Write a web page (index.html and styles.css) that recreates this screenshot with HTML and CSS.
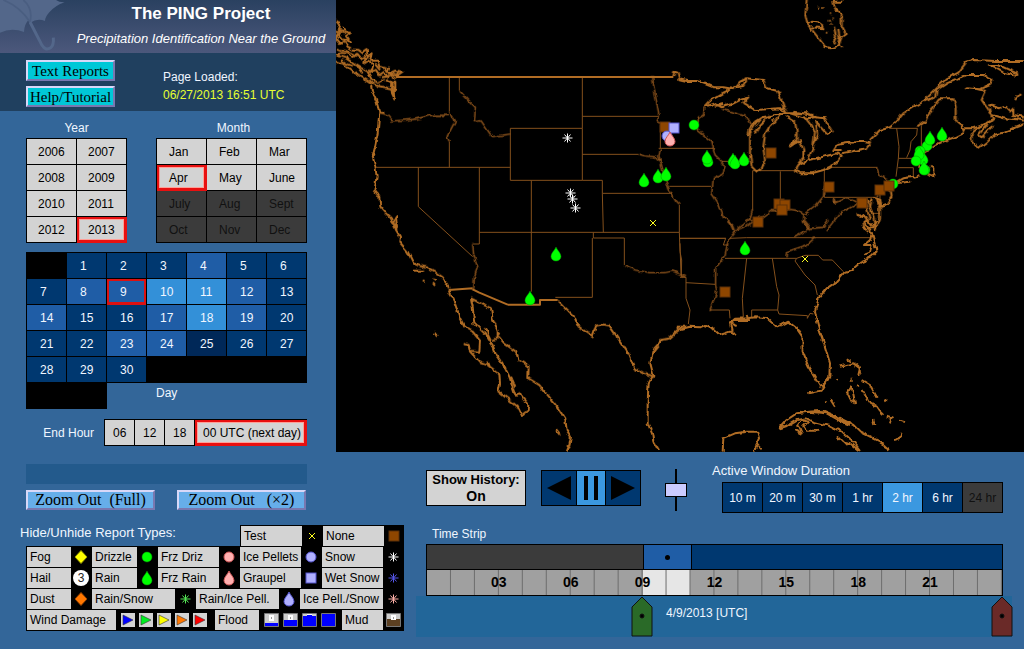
FILE: index.html
```html
<!DOCTYPE html>
<html lang="en">
<head>
  <meta charset="UTF-8">
  <meta name="viewport" content="width=device-width, initial-scale=1.0">
  <title>The PING Project</title>
  <link rel="stylesheet" href="styles.css">
</head>
<body>
  <!-- shared report symbols, all centered on 0,0 -->
  <svg class="defs" aria-hidden="true">
    <defs>
      <path id="drop" d="M0-7C1-4 5-1 5 2.500A5 4.500 0 0 1-5 2.500C-5-1-1-4 0-7Z"/>
      <circle id="dot" r="5"/>
      <rect id="square" x="-5" y="-5" width="10" height="10"/>
      <path id="diamond" d="M0-6.500L6 0 0 6.500-6 0Z"/>
      <path id="star" d="M.5-4.500V4.500M-4.500 0H5.500M-2.500-3.500L3.500 3.500M3.500-3.500L-2.500 3.500" fill="none"/>
      <path id="cross" d="M-3-3L3 3M3-3L-3 3" fill="none"/>
      <path id="flag" d="M-4-5L6 0-4 5Z"/>
    </defs>
  </svg>

  <div class="top">
    <div class="sidebar">
      <header class="banner">
        <svg class="umbrella" width="66" height="53" viewBox="0 0 198 159">
          <path class="canopy" d="M0 0H168Q178 8 194 7Q165 17 148 37Q135 52 135 63Q112 54 91 68L85 61Q73 73 72 96Q35 82 0 98Z"/>
          <path class="shade" d="M90 66Q60 20 10 0M90 66Q100 25 70 0"/>
          <path class="handle" d="M90 66L126 136Q136 153 152 143Q162 136 160 113"/>
        </svg>
        <div class="titles">
          <h1>The PING Project</h1>
          <p>Precipitation Identification Near the Ground</p>
        </div>
      </header>

      <div class="links">
        <div class="link-buttons">
          <button type="button" class="bevel teal">Text Reports</button>
          <button type="button" class="bevel teal">Help/Tutorial</button>
        </div>
        <div class="loaded">
          <div>Page Loaded:</div>
          <div class="stamp">06/27/2013 16:51 UTC</div>
        </div>
      </div>

      <div class="pickers">
        <div class="year">
          <h2>Year</h2>
          <div class="cells">
            <button type="button">2006</button><button type="button">2007</button>
            <button type="button">2008</button><button type="button">2009</button>
            <button type="button">2010</button><button type="button">2011</button>
            <button type="button">2012</button><button type="button" class="selected">2013</button>
          </div>
        </div>
        <div class="month">
          <h2>Month</h2>
          <div class="cells">
            <button type="button">Jan</button><button type="button">Feb</button><button type="button">Mar</button>
            <button type="button" class="selected">Apr</button><button type="button">May</button><button type="button">June</button>
            <button type="button" disabled>July</button><button type="button" disabled>Aug</button><button type="button" disabled>Sept</button>
            <button type="button" disabled>Oct</button><button type="button" disabled>Nov</button><button type="button" disabled>Dec</button>
          </div>
        </div>
      </div>

      <div class="days">
        <span class="blank"></span>
        <button type="button">1</button>
        <button type="button">2</button>
        <button type="button">3</button>
        <button type="button" class="some">4</button>
        <button type="button">5</button>
        <button type="button">6</button>
        <button type="button">7</button>
        <button type="button" class="some">8</button>
        <button type="button" class="some picked">9</button>
        <button type="button" class="many">10</button>
        <button type="button" class="many">11</button>
        <button type="button" class="some">12</button>
        <button type="button">13</button>
        <button type="button" class="some">14</button>
        <button type="button">15</button>
        <button type="button">16</button>
        <button type="button" class="some">17</button>
        <button type="button" class="many">18</button>
        <button type="button" class="some">19</button>
        <button type="button">20</button>
        <button type="button">21</button>
        <button type="button">22</button>
        <button type="button" class="some">23</button>
        <button type="button" class="some">24</button>
        <button type="button" class="few">25</button>
        <button type="button">26</button>
        <button type="button">27</button>
        <button type="button">28</button>
        <button type="button">29</button>
        <button type="button">30</button>
        <span class="blank rest"></span>
        <span class="blank tail"></span>
        <h2>Day</h2>
      </div>

      <div class="end-hour">
        <h2>End Hour</h2>
        <div class="cells">
          <button type="button">06</button><button type="button">12</button><button type="button">18</button><button type="button" class="selected">00 UTC (next day)</button>
        </div>
      </div>
    </div>

    <svg class="map" viewBox="0 0 2064 1356" preserveAspectRatio="xMinYMin slice" role="img" aria-label="Map of reports">
      <defs>
        <filter id="rough" filterUnits="userSpaceOnUse" x="0" y="0" width="2064" height="1356" color-interpolation-filters="sRGB">
          <feTurbulence type="fractalNoise" baseFrequency="0.05" numOctaves="2" seed="4"/>
          <feDisplacementMap in="SourceGraphic" scale="14" xChannelSelector="R" yChannelSelector="G"/>
        </filter>
      </defs>

      <!-- state borders, straight ones -->
      <g class="state">
        <path d="M340 231V335M340 425V502M370 231V272M118 502H523M247 502V620L410 770M430 502V732H410"/>
        <path d="M523 385H739V541H523ZM739 231V385M739 349H968M739 463H908M586 541V875M739 541H799V580M799 580H1008M799 580L802 697"/>
        <path d="M430 697H1030M772 697V714H865V795M769 714V892H658M973 375V445M968 445H1132M1000 559H1125M1030 615V697L1032 755 1037 780 1036 830M1030 715H1170"/>
        <g transform="translate(1032 0)">
          <path d="M218 512V628M301 514V632M218 512H350M433 508V592H590M455 502H592M650 385L657 440 655 475 648 530M655 475H715M655 503H700V535M630 385H712L710 405 693 425 690 450 680 473M724 378V440M125 484H208M560 592L580 640H600M600 583V620"/>
        </g>
        <g transform="translate(1032 660)">
          <path d="M0 55H137L130 75H145M200 53H575M135 115H350M200 115L187 235 190 292M277 115L290 200 297 225 293 270H215V292M293 270L297 282 382 287V295L390 280 400 282M18 188L105 193M0 70L3 168 18 172V235L30 270 25 312M90 270H148L150 295M350 115L345 123 375 165 405 195 412 225M350 115L375 106H415L428 120H457L490 155M200 53L150 55M18 172H0"/>
        </g>
      </g>

      <!-- state borders along rivers and ridges -->
      <g class="state river" filter="url(#rough)">
        <path d="M130 338L155 345 170 363 235 358 285 346H340M340 335L358 362 333 410 340 425M370 272L418 322 415 365 435 362 468 410 523 402"/>
        <path d="M949 231L955 270 968 340 965 360 973 375M908 463L925 468 955 470 970 485M973 445L968 470 975 490 990 545 1000 570 1020 605 1030 615M865 795L900 810 940 818 985 818 1010 813 1050 830M410 732L413 765 425 800 415 830 413 870"/>
        <g transform="translate(1032 0)">
          <path d="M75 322L70 345 55 355 52 390 95 425 105 465 125 484 135 500 130 520 100 535 95 580 115 610 130 650 150 665 160 690"/>
          <path d="M130 328L200 350 215 375M218 628L210 655 195 670 170 690M210 660L250 650 275 632 301 632 330 628 355 632 372 645 405 620 430 590 433 560M372 645L370 665 390 690M463 592V610L500 592 535 610 545 600M535 610L480 640 440 690M592 502L600 525 625 540M590 590L605 565"/>
        </g>
        <g transform="translate(1032 660)">
          <path d="M140 0L158 15 165 35 145 60 135 105 107 145V195L110 215 90 270M165 35L200 20 220 5M370 0L390 25 345 50M390 25L430 22 445 0M405 53L380 75 320 95 318 112"/>
        </g>
      </g>

      <path class="coast" d="M180 231H1012M515 914H612V900H665M338 870L410 865M410 868L430 878 515 914"/>

      <g class="coast" filter="url(#rough)">
        <!-- British Columbia and Puget Sound -->
        <path d="M0 62L10 75 6 92 25 96 45 98 30 108 42 125 20 118 5 102 0 118 12 132 25 125 35 140 50 148 65 150 78 160 92 150 95 170 110 160 105 182 125 182 130 200 150 205 160 220 178 212 200 215 185 225 170 220"/>
        <path d="M0 95L15 100 0 108M20 80L35 98M0 145L15 150 40 155 60 165 50 172 35 160 10 158 5 172M60 160L75 178 88 170 85 190 98 182 110 200 100 215 120 210 130 225 145 215 155 232 165 220 180 235M115 190L132 210M135 232L160 228 175 240M160 200L155 215 168 232M190 207L182 225"/>
        <path d="M0 185L20 190 45 210 75 230 100 245 125 258 150 262 165 265M0 165L30 175 60 195 95 215 105 235 125 248 145 240M15 180L35 192 50 198M65 200L80 220M150 240L165 250 172 260 175 295 168 280 165 255 178 245 178 275M100 240L110 250"/>
        <!-- Pacific coast -->
        <path d="M105 255L108 275 120 300 130 335 145 338M130 335L125 400 115 450 110 470 118 500 122 530 115 570 130 590 133 620 150 640 165 655 170 668 180 650 183 685 172 665 180 690 192 710 190 725 215 755 232 790 250 798 270 802 300 818 320 832 335 852 338 868"/>
        <path d="M232 812L265 812M260 841L266 843M293 835L302 840M291 850L297 857M296 998L303 1010"/>
        <!-- Rio Grande -->
        <path d="M665 900L690 925 715 950 728 980 770 1008 780 978 800 973 820 976 850 1020 880 1065 895 1105 925 1122 952 1128"/>
        <!-- Baja and mainland Mexico -->
        <g transform="translate(0 660)">
          <path d="M338 215L355 245 370 290 385 320 410 335 432 362 430 395 402 392 398 375 383 372M400 392L430 425 460 435 455 425M455 435L490 462 492 490 487 515 520 540 545 560 557 585 575 572 577 555 560 535 550 520 540 530 530 500 520 470 505 440 480 405 470 375 450 345 415 310 410 260 405 235 430 248 465 265 470 295 485 330 485 355 470 360M448 325L465 360M525 470L538 500M500 425L510 445M452 330L458 350"/>
          <path d="M485 345L490 335M488 350L505 370 540 395 548 420 578 440 577 475 610 495 630 520 660 555 688 598 692 630 705 650 700 675 692 695M660 630L672 645"/>
          <path d="M1050 320L1025 320 1030 328 1000 355 975 360 970 370 950 395 943 430 952 465 938 490 935 540 935 610 948 640 952 665 970 695M980 358L955 385 948 410M1032 328L1022 335M938 490L945 480"/>
        </g>

        <!-- lakes and north east -->
        <g transform="translate(1032 0)">
          <path d="M-20 231L-17 215 -7 218 -2 238 20 243 50 243 75 252 100 262 130 262 165 268"/>
          <path d="M75 320L95 298 130 278 165 262 180 245 200 235 250 240 260 265 290 272 300 290 310 320 320 340 295 325 260 328 225 330 190 310 205 292 180 300 150 315 125 322 105 310 75 320M165 262L190 258 200 240M105 318L130 312M290 325L310 325M295 275L305 300"/>
          <path d="M320 340L350 340 380 340 405 352 435 355 445 375 458 395 440 402 420 380 405 365M320 340L290 345 245 352 225 375 210 400 210 460 215 500 230 515 245 505 255 485 250 440 255 405 270 380 285 365 300 345M245 352L225 365 210 385 205 405M270 345L240 375 225 400M320 350L345 365 350 395 350 420 335 430 330 440 360 420 370 450 370 475 355 495 345 512 360 520 395 520 430 510 470 490 485 470 470 460 430 470 385 480 370 490M375 350L395 375 405 395 400 440 385 475M405 360L415 405 400 435M330 340L380 355 410 350M275 358L280 362M355 495L370 485M340 335L400 345"/>
          <path d="M485 460L510 455 560 445 570 430 545 425 495 430 470 435 460 450 485 450M570 420L600 390 630 382 650 365 670 340 710 315 735 300 760 275 800 235 835 218 860 185 880 180 950 183 1032 183"/>
          <path d="M735 305L765 290 770 270 800 250 860 225 910 225 935 235 930 255 900 268 858 265M890 268L918 272 905 300 925 330 940 360 910 375 880 385 855 385 850 400 830 410 800 420 765 435 740 450 725 460"/>
          <path d="M712 382L735 365 755 325 780 295 820 295 827 320V365L855 388M925 315L960 325 975 320 990 335 1000 325 1000 345 1032 350M930 325L935 345 970 355 1010 358M930 195L955 195 1010 220 1012 228 970 218ZM1005 300L1020 282"/>
          <path d="M940 360L905 375 875 400 875 425 895 445 920 425 940 405 965 400 1000 385 1032 372M920 375L895 405 905 412 940 375M1000 355L1032 362"/>
          <path d="M720 470L715 500 750 525 760 528V505L750 500M700 535L720 525M648 548L670 535 700 530M650 550L690 545M640 550L630 560 635 590 620 615 605 620 600 600 580 590M590 595L600 620 600 655 585 690M575 595L570 620 580 650 585 690M530 640L555 650 575 680M565 600L560 625 570 660M555 690L550 670 560 660"/>
          <path d="M380 0L376 45 382 72 400 95 420 120 435 140 455 145 475 138 485 110 497 102 485 80 485 45 465 25 460 5H490M380 72L400 65 420 68 430 85 395 82M462 80L468 110 460 130M478 115L472 140M485 145V138M475 90L480 120"/>
          <path class="speck" d="M415 23h5M427 24h3M446 62h4M455 55h3M438 98h4M449 72h3M450 40h3"/>
        </g>

        <!-- Gulf, Florida, islands -->
        <g transform="translate(1032 660)">
          <path d="M0 328L30 320 60 322 75 315 95 322 120 345 150 335 168 345M155 335L150 310 165 296 205 295 225 292 260 294 292 322 325 305 350 325 367 350 368 395 385 440 405 475 420 500 435 495 448 470 450 430 435 380 420 335 408 290 405 275 415 235 440 205 470 185 495 155 515 150 540 128 560 120M160 300L210 300M150 310L170 318M200 285L205 298M370 385V405M378 430L385 445M405 515L385 520M435 495L425 512 405 515"/>
          <path d="M575 40L585 75 590 95 575 110 555 118M550 5L570 30 575 45 570 60 552 75 575 75 570 95 555 100M590 0L575 25 560 20M560 0L575 15M548 20L565 35"/>
          <path d="M298 625L320 600 350 580 385 575 430 572 460 585 490 600 520 615 540 635 570 650 600 665 630 690M300 625L320 618 350 600 380 595 400 605 450 618 490 638 520 665 540 690M350 620L365 600 385 605 370 620 380 632 415 632M345 630L365 640 355 615M385 575L440 580 475 600 510 615M470 650L490 665 510 670 535 690M480 655L500 675M600 670L625 685"/>
          <path d="M480 440L500 435 520 430 540 445 535 465M500 418L512 425M470 475L474 480M515 470V485M500 520L515 500 525 550 515 545 500 515M545 480L570 495 590 530M548 510L565 545 590 560 600 575 610 585M530 498L535 502M615 538L620 545M620 590L635 595 630 610M640 590L630 600M660 602L672 606M580 600L583 612M665 635L660 655 642 660M452 540L465 560M435 542L440 545M538 440L540 460"/>
          <path d="M128 695L130 655 165 640 200 635 235 635 240 655 220 695M232 675L242 685"/>
        </g>
      </g>

      <!-- reports -->
      <g class="reports" transform="scale(3)">
        <use href="#star" class="white" x="231" y="138"/>
        <use href="#star" class="white" x="234" y="193"/>
        <use href="#star" class="white" x="236" y="199"/>
        <use href="#star" class="white" x="239" y="208"/>
        <use href="#square" class="brown" x="329" y="127"/>
        <use href="#square" class="violet" x="338" y="128"/>
        <use href="#dot" class="violet" x="331" y="136"/>
        <use href="#drop" class="pink" x="334" y="139"/>
        <use href="#dot" class="green" x="358" y="125"/>
        <use href="#drop" class="green" x="308" y="180"/>
        <use href="#drop" class="green" x="322" y="176"/>
        <use href="#drop" class="green" x="330" y="174"/>
        <use href="#cross" class="yellow" x="317" y="223"/>
        <use href="#drop" class="green" x="372" y="160"/>
        <use href="#drop" class="green" x="371" y="157"/>
        <use href="#drop" class="green" x="397" y="160"/>
        <use href="#drop" class="green" x="399" y="162"/>
        <use href="#drop" class="green" x="408" y="159"/>
        <use href="#drop" class="green" x="220" y="254"/>
        <use href="#drop" class="green" x="194" y="298"/>
        <use href="#drop" class="green" x="409" y="248"/>
        <use href="#square" class="brown" x="435" y="153"/>
        <use href="#square" class="brown" x="493" y="187"/>
        <use href="#square" class="brown" x="443" y="204"/>
        <use href="#square" class="brown" x="449" y="205"/>
        <use href="#square" class="brown" x="446" y="210"/>
        <use href="#square" class="brown" x="422" y="222"/>
        <use href="#square" class="brown" x="389" y="292"/>
        <use href="#square" class="brown" x="526" y="203"/>
        <use href="#square" class="brown" x="544" y="190"/>
        <use href="#dot" class="green" x="557" y="184"/>
        <use href="#square" class="brown" x="553" y="186"/>
        <use href="#cross" class="yellow" x="469" y="259"/>
        <use href="#drop" class="green" x="606" y="134"/>
        <use href="#dot" class="green" x="591" y="146"/>
        <use href="#drop" class="green" x="594" y="138"/>
        <use href="#drop" class="green" x="587" y="158"/>
        <use href="#dot" class="green" x="584" y="151"/>
        <use href="#drop" class="green" x="583" y="153"/>
        <use href="#dot" class="green" x="580" y="161"/>
        <use href="#dot" class="green" x="589" y="170"/>
        <use href="#drop" class="green" x="588" y="168"/>
      </g>
    </svg>
  </div>

  <div class="bottom">
    <div class="tools">
      <div class="status"></div>
      <div class="zoom-buttons">
        <button type="button" class="bevel sky">Zoom Out&nbsp; (Full)</button>
        <button type="button" class="bevel sky">Zoom Out&nbsp;&nbsp; (×2)</button>
      </div>

      <div class="types-head">
        <h2>Hide/Unhide Report Types:</h2>
        <div class="types-row first">
          <button type="button" class="type"><span class="w61">Test</span><svg viewBox="-10 -10 20 20"><use href="#cross" class="yellow"/></svg></button>
          <button type="button" class="type"><span class="w61">None</span><svg viewBox="-10 -10 20 20"><use href="#square" class="brown"/></svg></button>
        </div>
      </div>
      <div class="types">
        <div class="types-row">
          <button type="button" class="type"><span class="w44">Fog</span><svg viewBox="-10 -10 20 20"><use href="#diamond" class="fog"/></svg></button>
          <button type="button" class="type"><span class="w45">Drizzle</span><svg viewBox="-10 -10 20 20"><use href="#dot" class="green"/></svg></button>
          <button type="button" class="type"><span class="w61">Frz Driz</span><svg viewBox="-10 -10 20 20"><use href="#dot" class="pink"/></svg></button>
          <button type="button" class="type"><span class="w61">Ice Pellets</span><svg viewBox="-10 -10 20 20"><use href="#dot" class="violet"/></svg></button>
          <button type="button" class="type"><span class="w61">Snow</span><svg viewBox="-10 -10 20 20"><use href="#star" class="white"/></svg></button>
        </div>
        <div class="types-row">
          <button type="button" class="type"><span class="w44">Hail</span><svg viewBox="-10 -10 20 20"><circle r="8" fill="#fff"/><text class="hail" y="4" text-anchor="middle">3</text></svg></button>
          <button type="button" class="type"><span class="w45">Rain</span><svg viewBox="-10 -10 20 20"><use href="#drop" class="green"/></svg></button>
          <button type="button" class="type"><span class="w61">Frz Rain</span><svg viewBox="-10 -10 20 20"><use href="#drop" class="pink"/></svg></button>
          <button type="button" class="type"><span class="w61">Graupel</span><svg viewBox="-10 -10 20 20"><use href="#square" class="violet"/></svg></button>
          <button type="button" class="type"><span class="w61">Wet Snow</span><svg viewBox="-10 -10 20 20"><use href="#star" class="blue"/></svg></button>
        </div>
        <div class="types-row">
          <button type="button" class="type"><span class="w44">Dust</span><svg viewBox="-10 -10 20 20"><use href="#diamond" class="dust"/></svg></button>
          <button type="button" class="type"><span class="w83">Rain/Snow</span><svg viewBox="-10 -10 20 20"><use href="#star" class="lime"/></svg></button>
          <button type="button" class="type"><span class="w83">Rain/Ice Pell.</span><svg viewBox="-10 -10 20 20"><use href="#drop" class="violet"/></svg></button>
          <button type="button" class="type"><span class="w83">Ice Pell./Snow</span><svg viewBox="-10 -10 20 20"><use href="#star" class="rose"/></svg></button>
        </div>
        <div class="types-row">
          <button type="button" class="type"><span class="w89">Wind Damage</span>
            <svg class="wind" viewBox="-10 -10 98 20">
              <path fill="#d3d3d3" d="M-5-7H9V7H-5ZM13-7H27V7H13ZM31-7H45V7H31ZM49-7H63V7H49ZM67-7H81V7H67Z"/>
              <g stroke="#333" stroke-width=".6">
                <use href="#flag" fill="#0000ff" x="1"/>
                <use href="#flag" fill="#00ee22" x="19"/>
                <use href="#flag" fill="#ffff00" x="37"/>
                <use href="#flag" fill="#ff7700" x="55"/>
                <use href="#flag" fill="#ff0000" x="73"/>
              </g>
            </svg></button>
          <button type="button" class="type"><span class="w44">Flood</span>
            <svg class="flood" viewBox="0 0 82 20">
              <g stroke="#777">
                <path fill="#ccc" d="M5.500 3.500h14v13h-14zM24.500 3.500h14v13h-14z"/>
                <path fill="#00f" d="M43.500 3.500h14v13h-14zM62.500 3.500h14v13h-14z"/>
              </g>
              <path fill="#fff" d="M10 5h5v6h-5zM29 5h5v5h-5zM48 4h5v1h-5z"/>
              <path fill="#00f" d="M6 13h13v3H6zM25 10h13v6H25z"/>
              <path fill="#999" d="M12 7h1v2h-1zM31 7h1v2h-1z"/>
              <path fill="#ccc" d="M44 4h4v2h-4zM53 4h4v2h-4z"/>
            </svg></button>
          <button type="button" class="type"><span class="w41">Mud</span>
            <svg viewBox="0 0 20 20">
              <path fill="#ccc" stroke="#777" d="M3.500 3.500h14v13h-14z"/>
              <path fill="#fff" d="M8 5h5v5H8z"/>
              <path fill="#999" d="M10 7h1v2h-1z"/>
              <path fill="#5c4022" d="M4 9h4v1h5V9h4v7H4z"/>
            </svg></button>
        </div>
      </div>
    </div>

    <div class="timeline">
      <div class="controls">
        <button type="button" class="history">Show History:<strong>On</strong></button>
        <div class="player">
          <button type="button" aria-label="Step back"><svg width="24" height="24"><path d="M24 0V24L0 12Z"/></svg></button>
          <button type="button" class="on" aria-label="Pause"><svg width="14" height="24"><path d="M0 0h4v24H0zM10 0h4v24h-4z"/></svg></button>
          <button type="button" aria-label="Step forward"><svg width="24" height="24"><path d="M0 0V24L24 12Z"/></svg></button>
        </div>
        <input type="range" class="speed" aria-label="Animation speed" min="0" max="100" value="50">
        <div class="duration">
          <h2>Active Window Duration</h2>
          <div class="duration-cells">
            <button type="button">10 m</button><button type="button">20 m</button><button type="button">30 m</button><button type="button">1 hr</button><button type="button" class="on">2 hr</button><button type="button">6 hr</button><button type="button" disabled>24 hr</button>
          </div>
        </div>
      </div>

      <h2 class="strip-title">Time Strip</h2>
      <div class="strip">
        <div class="activity">
          <div class="off"></div>
          <div class="window"></div>
          <div class="open"></div>
        </div>
        <div class="hours">
          <span>03</span><span>06</span><span>09</span><span>12</span><span>15</span><span>18</span><span>21</span>
        </div>
      </div>
      <div class="handles">
        <div class="track">
          <button type="button" class="handle-start" aria-label="Window start"><svg width="22" height="41"><path fill="#2a6a28" d="M11 1L21 11V40H1V11Z"/><circle cx="11" cy="20" r="2"/></svg></button>
          <span class="date">4/9/2013 [UTC]</span>
          <button type="button" class="handle-end" aria-label="Window end"><svg width="22" height="41"><path fill="#6a2a28" d="M11 1L21 11V40H1V11Z"/><circle cx="11" cy="20" r="2"/></svg></button>
        </div>
      </div>
    </div>
  </div>
</body>
</html>
```

FILE: styles.css
```css
* {
  box-sizing: border-box;
}

body {
  margin: 0;
  background-color: #336699;
  color: #f0f6ff;
  font-family: "Liberation Sans", Arial, sans-serif;
  font-size: 12px;
  line-height: 16px;
}

h1, h2, p {
  margin: 0;
}

h2 {
  font-size: 12px;
  font-weight: normal;
}

button {
  margin: 0;
  padding: 0;
  border: none;
  font-family: inherit;
  font-size: 12px;
  line-height: 16px;
  color: #000;
  cursor: pointer;
}

.defs {
  position: absolute;
  width: 0;
  height: 0;
}

.top {
  display: flex;
  height: 452px;
}

.sidebar {
  flex: none;
  width: 336px;
}

/* banner */
.banner {
  display: flex;
  height: 53px;
  background: linear-gradient(#2a4160, #4c587c);
}

.umbrella {
  flex: none;
}

.canopy {
  fill: #53678a;
}

.shade {
  fill: none;
  stroke: #4a5e81;
  stroke-width: 5;
}

.handle {
  fill: none;
  stroke: #53678a;
  stroke-width: 9;
}

.titles {
  flex: 1;
  color: #fff;
  text-align: center;
  white-space: nowrap;
}

h1 {
  font-size: 17px;
  line-height: 27px;
}

.titles p {
  font-size: 13px;
  font-style: italic;
  line-height: 24px;
}

.links {
  display: flex;
  gap: 48px;
  height: 58px;
  padding: 7px 0 0 26px;
  background-color: #20405f;
}

.link-buttons {
  display: flex;
  flex-direction: column;
  gap: 5px;
}

.bevel {
  border: 2px solid;
  border-color: #d8d8f8 #7878b0 #7878b0 #d8d8f8;
  font-family: "Liberation Serif", "Times New Roman", serif;
  white-space: nowrap;
}

.teal {
  width: 89px;
  height: 21px;
  background-color: #00c8d7;
  font-size: 15px;
}

.sky {
  width: 129px;
  height: 20px;
  background-color: #66aee9;
  font-size: 16px;
}

.loaded {
  padding-top: 8px;
  line-height: 18px;
}

.stamp {
  color: #e6ff30;
}

/* date pickers */
.pickers {
  display: flex;
  gap: 29px;
  padding: 9px 0 0 26px;
}

.pickers h2 {
  height: 18px;
  text-align: center;
}

.month h2 {
  padding-left: 4px;
}

.cells {
  display: grid;
  border: solid #000;
  border-width: 1px 0 0 1px;
}

.cells button {
  height: 26px;
  padding-left: 11px;
  border: solid #000;
  border-width: 0 1px 1px 0;
  background-color: #d3d3d3;
  text-align: left;
}

.year .cells {
  grid-template-columns: repeat(2, 50px);
}

.month .cells {
  grid-template-columns: repeat(3, 50px);
}

.month .cells button {
  padding-left: 12px;
}

.cells button:disabled {
  background-color: #3b3b3b;
  color: #111;
}

.cells .selected {
  border-color: #e81010;
  box-shadow: inset 1px 1px 0 #e81010, inset 0 0 0 2px #e81010, inset 0 0 0 3px #ffa098;
}

.days {
  display: grid;
  grid-template-columns: repeat(7, 40px);
  grid-auto-rows: 26px;
  width: 281px;
  margin: 9px 0 0 26px;
  border-top: 1px solid #000;
  padding-left: 1px;
}

.days button {
  padding-left: 13px;
  border: solid #000;
  border-width: 0 1px 1px 0;
  background-color: #003870;
  box-shadow: -1px 0 0 #000;
  color: #f0f6ff;
  text-align: left;
}

.days .some {
  background-color: #1f5da6;
}

.days .many {
  background-color: #3390d8;
}

.days .few {
  background-color: #002858;
}

.days .picked {
  border-color: #dd1111;
  box-shadow: inset 0 0 0 2px #dd1111;
}

.blank {
  background-color: #000;
  box-shadow: -1px 0 0 #000;
}

.rest {
  grid-column: 4 / -1;
}

.tail {
  grid-column: 1 / 3;
}

.days h2 {
  grid-column: 3 / -1;
  padding: 2px 0 0 49px;
}

.end-hour {
  display: flex;
  justify-content: flex-end;
  align-items: center;
  gap: 10px;
  width: 307px;
  margin-top: 10px;
}

.end-hour .cells {
  grid-template-columns: 30px 30px 30px 112px;
}

.end-hour button {
  padding-left: 8px;
}

/* map */
.map {
  flex: 1;
  min-width: 0;
  height: 452px;
  background-color: #000;
}

.state,
.coast {
  fill: none;
  stroke-linejoin: round;
}

.state {
  stroke: #84501c;
  stroke-width: 3;
}

.river {
  stroke: #96591e;
  stroke-width: 4;
}

.coast {
  stroke: #b06c24;
  stroke-width: 6;
}

/* report symbol colors */
.green { fill: #00ff00; stroke: #009900; stroke-width: 0.5; }
.pink { fill: #ffb0b0; stroke: #cc5555; }
.violet { fill: #b0b0ff; stroke: #5555cc; }
.brown { fill: #8e4600; stroke: #5c3008; }
.fog { fill: #ffff00; stroke: #999900; }
.dust { fill: #ff7700; stroke: #994400; }
.white { stroke: #fff; }
.yellow { stroke: #ffff20; }
.blue { stroke: #5555e8; }
.lime { stroke: #55e855; }
.rose { stroke: #ffb0a8; }

.hail {
  fill: #222;
  font-size: 12px;
}

/* lower part */
.bottom {
  display: flex;
  gap: 12px;
}

.tools {
  flex: none;
  width: 404px;
  padding: 12px 0 0 26px;
}

.status {
  width: 281px;
  height: 20px;
  background-color: #235a8c;
}

.zoom-buttons {
  display: flex;
  gap: 22px;
  margin: 6px 0 15px;
}

.types-head {
  display: flex;
  justify-content: space-between;
  margin-left: -6px;
}

.types-head h2,
.duration h2 {
  font-size: 13px;
}

.types {
  border-bottom: 1px solid #000;
}

.types-row {
  display: flex;
  gap: 1px;
  height: 21px;
  padding: 1px 0 0 1px;
  background-color: #000;
}

.type {
  display: flex;
  background-color: #000;
}

.type span {
  height: 20px;
  padding-left: 3px;
  background-color: #d3d3d3;
  line-height: 20px;
  text-align: left;
  white-space: nowrap;
}

.type svg {
  width: 20px;
  height: 20px;
}

.type .wind {
  width: 98px;
}

.type .flood {
  width: 82px;
}

.w41 { width: 41px; }
.w44 { width: 44px; }
.w45 { width: 45px; }
.w61 { width: 61px; }
.w83 { width: 83px; }
.w89 { width: 89px; }

.timeline {
  flex: 1;
  padding: 11px 12px 0 0;
}

.controls {
  display: flex;
  padding: 0 9px 0 10px;
  height: 63px;
}

.history {
  width: 100px;
  height: 36px;
  margin-top: 7px;
  border: 1px solid #000;
  background-color: #d3d3d3;
  font-size: 13px;
  font-weight: bold;
}

.history strong {
  display: block;
  font-size: 14px;
}

.player {
  display: flex;
  height: 36px;
  margin: 7px 0 0 15px;
  border: 1px solid #000;
}

.player button {
  display: flex;
  align-items: center;
  justify-content: center;
  width: 34px;
  background-color: #003870;
}

.player .on {
  width: 30px;
  border: solid #000;
  border-width: 0 1px;
  background-color: #3b98e0;
}

.speed {
  appearance: none;
  -webkit-appearance: none;
  writing-mode: vertical-lr;
  width: 22px;
  height: 42px;
  margin: 6px 0 0 24px;
  background: linear-gradient(#000, #000) center / 2px 100% no-repeat;
}

.speed::-webkit-slider-thumb {
  -webkit-appearance: none;
  width: 22px;
  height: 14px;
  border: 1px solid #000;
  background-color: #ccccff;
}

.duration {
  margin-left: auto;
}

.duration h2 {
  margin-left: -10px;
}

.duration-cells {
  display: flex;
  margin-top: 3px;
  border: solid #000;
  border-width: 1px 0 1px 1px;
}

.duration-cells button {
  width: 40px;
  height: 29px;
  border-right: 1px solid #000;
  background-color: #003870;
  color: #f0f6ff;
}

.duration-cells .on {
  background-color: #3b98e0;
}

.duration-cells button:disabled {
  background-color: #3b3b3b;
  color: #111;
}

/* time strip */
.strip-title {
  padding-left: 16px;
}

.strip {
  margin: 2px 9px 0 10px;
  border: 1px solid #000;
}

.activity {
  display: flex;
  height: 25px;
  border-bottom: 1px solid #000;
}

.activity .off {
  width: 37.5%;
  background-color: #3b3b3b;
}

.activity .window {
  display: flex;
  align-items: center;
  justify-content: center;
  flex: none;
  width: 8.5%;
  border: solid #000;
  border-width: 0 1px;
  background-color: #1f5da6;
}

.window::after {
  content: "";
  width: 5px;
  height: 5px;
  border-radius: 50%;
  background-color: #000;
}

.activity .open {
  flex: 1;
  background-color: #003870;
}

.hours {
  display: flex;
  height: 25px;
  padding: 0 6.25%;
  background:
    linear-gradient(to left, #6c6c6c 1px, transparent 1px) 0 0 / calc(100% / 24) 100%,
    linear-gradient(to right, #a0a0a0 37.5%, #e6e6e6 37.5%, #e6e6e6 45.8%, #a0a0a0 45.8%);
  color: #000;
  font-size: 14px;
  font-weight: bold;
  line-height: 25px;
}

.hours span {
  flex: 1;
  text-align: center;
}

.handles {
  height: 41px;
  padding: 0 10px;
  background-color: #226699;
}

.track {
  position: relative;
  height: 41px;
  padding: 9px 0 0 240px;
}

.track button {
  position: absolute;
  top: 0;
  margin-left: -11px;
  background: none;
}

.track svg {
  display: block;
  stroke: #111;
}

.handle-start {
  left: 37.5%;
}

.handle-end {
  left: 100%;
}
```
